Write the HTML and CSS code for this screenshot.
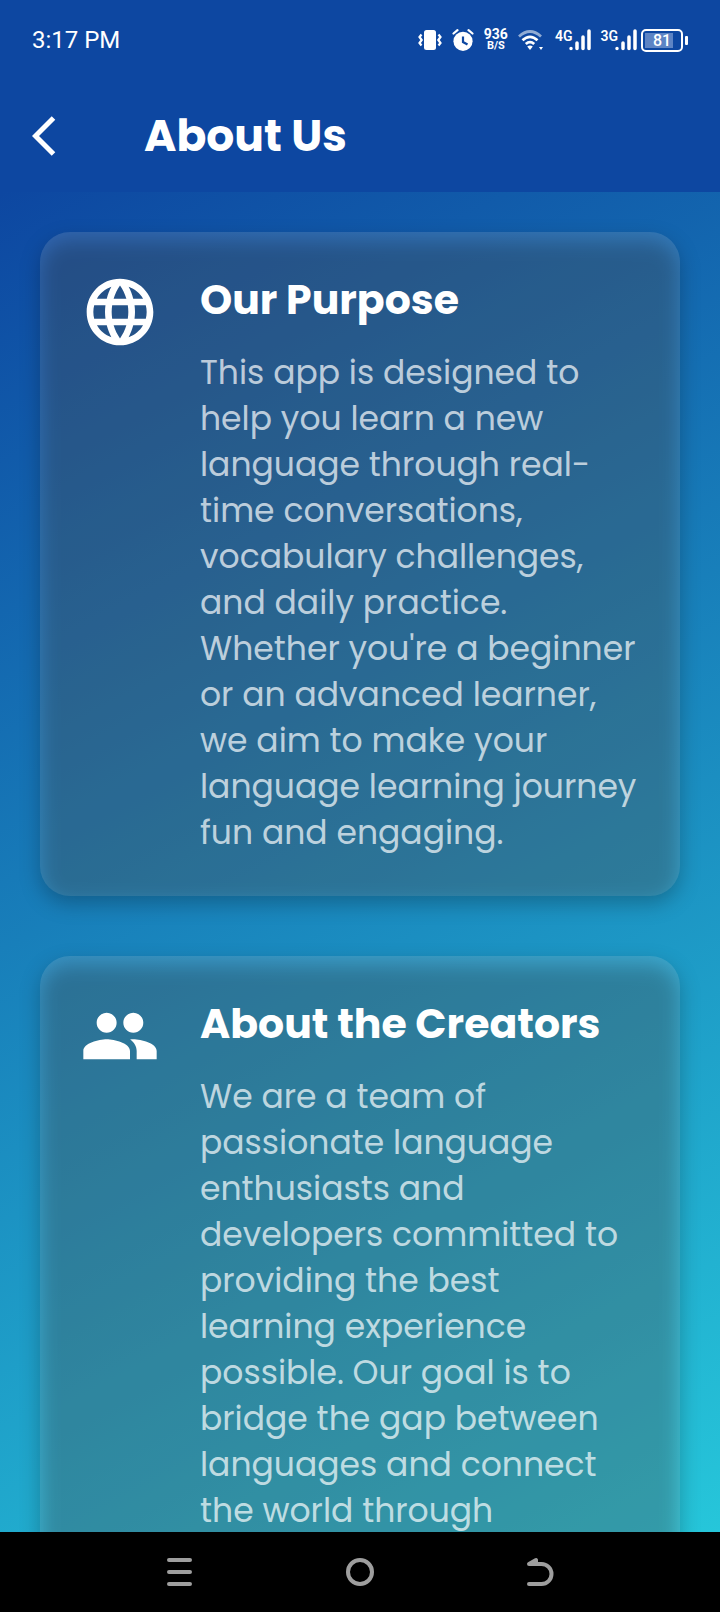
FILE: index.html
```html
<!DOCTYPE html>
<html lang="en">
<head>
<meta charset="utf-8">
<meta name="viewport" content="width=device-width, initial-scale=1">
<title>About Us</title>
<link rel="stylesheet" href="styles.css">
</head>
<body>
<div class="status">
  <span class="time">3:17 PM</span>
  <div class="indicators">
    <svg class="vibrate" width="24" height="22" viewBox="0 0 24 22" aria-hidden="true"><rect x="6" y="1" width="12" height="20" rx="2.5" fill="#fff"/><path d="M3.500 5.500 1.500 8l2.200 3-2.200 3 2 2.500M20.500 5.500l2 2.500-2.200 3 2.200 3-2 2.500" fill="none" stroke="#fff" stroke-width="2.200"/></svg>
    <svg class="alarm" width="22" height="22" viewBox="0 0 22 22" aria-hidden="true"><circle cx="11" cy="12.300" r="9.600" fill="#fff"/><path d="M1.500 4.500 5.500 1.200M20.500 4.500l-4-3.300" stroke="#fff" stroke-width="2.200" stroke-linecap="round"/><path d="M11 7.500v5.500l4.500 2.500" fill="none" stroke="#0d47a1" stroke-width="2.200"/></svg>
    <span class="speed"><b>936</b><small>B/S</small></span>
    <svg class="wifi" width="26" height="22" viewBox="0 0 26 22" fill="none" stroke="#fff" stroke-width="2.800" aria-hidden="true"><path d="M1 7.500Q12 -2.500 23 7.500" opacity=".55"/><path d="M4.500 11.300Q12 4.500 19.500 11.300M7.800 15Q12 11.200 16.200 15"/><path d="M9.200 17.500Q12 15.500 14.800 17.500L12 21Z" fill="#fff" stroke="none"/><path d="M21 18h4L23 21Z" fill="#fff" stroke="none"/></svg>
    <span class="signal"><b>4G</b><svg width="22" height="22" viewBox="0 0 22 22" stroke="#fff" stroke-width="3.500" stroke-linecap="round" aria-hidden="true"><path d="M2 19.500v.1M8 14v5.600M14 8v11.600M20 2v17.600"/></svg></span>
    <span class="signal"><b>3G</b><svg width="22" height="22" viewBox="0 0 22 22" stroke="#fff" stroke-width="3.500" stroke-linecap="round" aria-hidden="true"><path d="M2 19.500v.1M8 14v5.600M14 8v11.600M20 2v17.600"/></svg></span>
    <span class="battery"><span class="cell">81</span></span>
  </div>
</div>
<header class="appbar">
  <button class="back" type="button" aria-label="Back"><svg width="24" height="40" viewBox="0 0 24 40" aria-hidden="true"><path d="M21.500 2 3.500 20l18 18" fill="none" stroke="#fff" stroke-width="5"/></svg></button>
  <h1>About Us</h1>
</header>
<main class="content">
  <section class="card">
    <svg class="icon" viewBox="0 0 24 24" fill="#fff" aria-hidden="true"><path d="M11.990 2C6.470 2 2 6.480 2 12s4.470 10 9.990 10C17.520 22 22 17.520 22 12S17.520 2 11.990 2zm6.930 6h-2.950c-.32-1.250-.78-2.450-1.380-3.560 1.840.63 3.370 1.910 4.330 3.560zM12 4.040c.83 1.200 1.480 2.530 1.910 3.960h-3.820c.43-1.430 1.080-2.760 1.910-3.960zM4.260 14C4.100 13.360 4 12.690 4 12s.1-1.360.26-2h3.380c-.08.66-.14 1.320-.14 2s.06 1.340.14 2H4.260zm.82 2h2.950c.32 1.250.78 2.450 1.380 3.560-1.840-.63-3.370-1.900-4.330-3.560zm2.950-8H5.080c.96-1.660 2.490-2.930 4.330-3.560C8.810 5.550 8.350 6.750 8.030 8zM12 19.960c-.83-1.200-1.480-2.530-1.910-3.960h3.820c-.43 1.430-1.080 2.760-1.910 3.960zM14.340 14H9.660c-.09-.66-.16-1.320-.16-2s.07-1.350.16-2h4.680c.09.65.16 1.320.16 2s-.07 1.340-.16 2zm.25 5.560c.6-1.110 1.060-2.310 1.380-3.560h2.950c-.96 1.650-2.490 2.930-4.330 3.560zM16.360 14c.08-.66.14-1.320.14-2s-.06-1.340-.14-2h3.380c.16.64.26 1.310.26 2s-.1 1.360-.26 2h-3.380z"/></svg>
    <div class="copy">
      <h2>Our Purpose</h2>
      <p>This app is designed to help you learn a new language through real-time conversations, vocabulary challenges, and daily practice. Whether you're a beginner or an advanced learner, we aim to make your language learning journey fun and engaging.</p>
    </div>
  </section>
  <section class="card">
    <svg class="icon" viewBox="0 0 24 24" fill="#fff" aria-hidden="true"><path d="M16 11c1.660 0 2.990-1.340 2.990-3S17.660 5 16 5s-3 1.340-3 3 1.340 3 3 3zm-8 0c1.660 0 2.990-1.340 2.990-3S9.660 5 8 5 5 6.340 5 8s1.340 3 3 3zm0 2c-2.330 0-7 1.170-7 3.500V19h14v-2.500c0-2.330-4.670-3.500-7-3.500zm8 0c-.29 0-.62.020-.97.050 1.160.84 1.970 1.970 1.970 3.450V19h6v-2.500c0-2.330-4.670-3.500-7-3.500z"/></svg>
    <div class="copy">
      <h2>About the Creators</h2>
      <p>We are a team of passionate language enthusiasts and developers committed to providing the best learning experience possible. Our goal is to bridge the gap between languages and connect the world through</p>
    </div>
  </section>
</main>
<nav class="navbar" aria-label="System">
  <button type="button" aria-label="Recent apps"><svg width="28" height="30" viewBox="0 0 28 30" aria-hidden="true"><path d="M3 3h21M3 15h21M3 27h21"/></svg></button>
  <button type="button" aria-label="Home"><svg width="28" height="30" viewBox="0 0 28 30" aria-hidden="true"><circle cx="14" cy="15" r="12"/></svg></button>
  <button type="button" aria-label="Go back"><svg width="28" height="30" viewBox="0 0 28 30" aria-hidden="true"><path d="M3 27H15.500a10 10 0 0 0 0-20H3L10 3V6"/></svg></button>
</nav>
</body>
</html>
```
FILE: styles.css
```css
* { box-sizing: border-box; }

body {
  margin: 0;
  height: 100vh;
  display: flex;
  flex-direction: column;
  background: #0d47a1;
  color: #fff;
  font-family: Poppins, Inter, "Open Sans", sans-serif;
}

button {
  padding: 0;
  border: 0;
  background: none;
  display: flex;
}

h1, h2, p { margin: 0; }

.status {
  flex: none;
  height: 80px;
  padding: 0 32px;
  display: flex;
  align-items: center;
  justify-content: space-between;
  font-family: Roboto, sans-serif;
}

.time { font-size: 24px; }

.indicators {
  display: flex;
  align-items: center;
  gap: 10px;
}

.speed {
  display: flex;
  flex-direction: column;
  align-items: center;
  line-height: 12px;
}

.speed b { font-size: 14px; font-weight: 700; }
.speed small { font-size: 11px; font-weight: 700; }

.signal {
  display: flex;
  align-items: flex-start;
  font-size: 14px;
  line-height: 14px;
}

.signal b { font-weight: 600; }
.signal svg { margin-left: -3px; }

.wifi { margin-right: 1px; }
.signal + .signal { margin-left: -1px; }

.battery {
  display: flex;
  align-items: center;
  gap: 2px;
  margin-left: -6px;
}

.battery::after {
  content: "";
  width: 3px;
  height: 9px;
  border-radius: 1px;
  background: #fff;
}

.cell {
  width: 42px;
  height: 23px;
  border: 2px solid #fff;
  border-radius: 5px;
  text-align: center;
  font-size: 16px;
  font-weight: 500;
  line-height: 19px;
  background: linear-gradient(#5d84c4, #5d84c4) 2px 50% / 28px 15px no-repeat;
}

.appbar {
  flex: none;
  height: 112px;
  padding: 0 32px;
  display: flex;
  align-items: center;
  gap: 88px;
}

.appbar h1 {
  font-size: 44px;
  font-weight: 700;
  line-height: 64px;
}

.content {
  flex: 1;
  min-height: 0;
  overflow: auto;
  scrollbar-width: none;
  padding: 40px;
  display: flex;
  flex-direction: column;
  gap: 60px;
  background: linear-gradient(152deg, #0d47a1, #26c6da);
}

.card {
  flex: none;
  position: relative;
  isolation: isolate;
  display: flex;
  align-items: flex-start;
  gap: 40px;
  padding: 40px;
  border-radius: 30px;
  background: rgba(255, 255, 255, 0.14);
}

/* The shade stays visible through the translucent card. */
.card::before {
  content: "";
  position: absolute;
  inset: 8px 0 -8px;
  z-index: -1;
  border-radius: 30px;
  background: rgba(0, 0, 0, 0.24);
  filter: blur(10px);
}

.icon {
  flex: none;
  width: 80px;
  height: 80px;
}

.copy { flex: 1; min-width: 0; }

.copy h2 {
  margin-bottom: 22px;
  font-size: 41px;
  font-weight: 700;
  line-height: 56px;
}

.copy p {
  font-size: 33px;
  line-height: 46px;
  color: rgba(255, 255, 255, 0.7);
}

.navbar {
  flex: none;
  height: 80px;
  padding: 0 90px;
  display: flex;
  align-items: center;
  justify-content: space-around;
  background: #000;
}

.navbar svg {
  fill: none;
  stroke: #9e9e9e;
  stroke-width: 4;
  stroke-linecap: round;
  stroke-linejoin: round;
}
```
